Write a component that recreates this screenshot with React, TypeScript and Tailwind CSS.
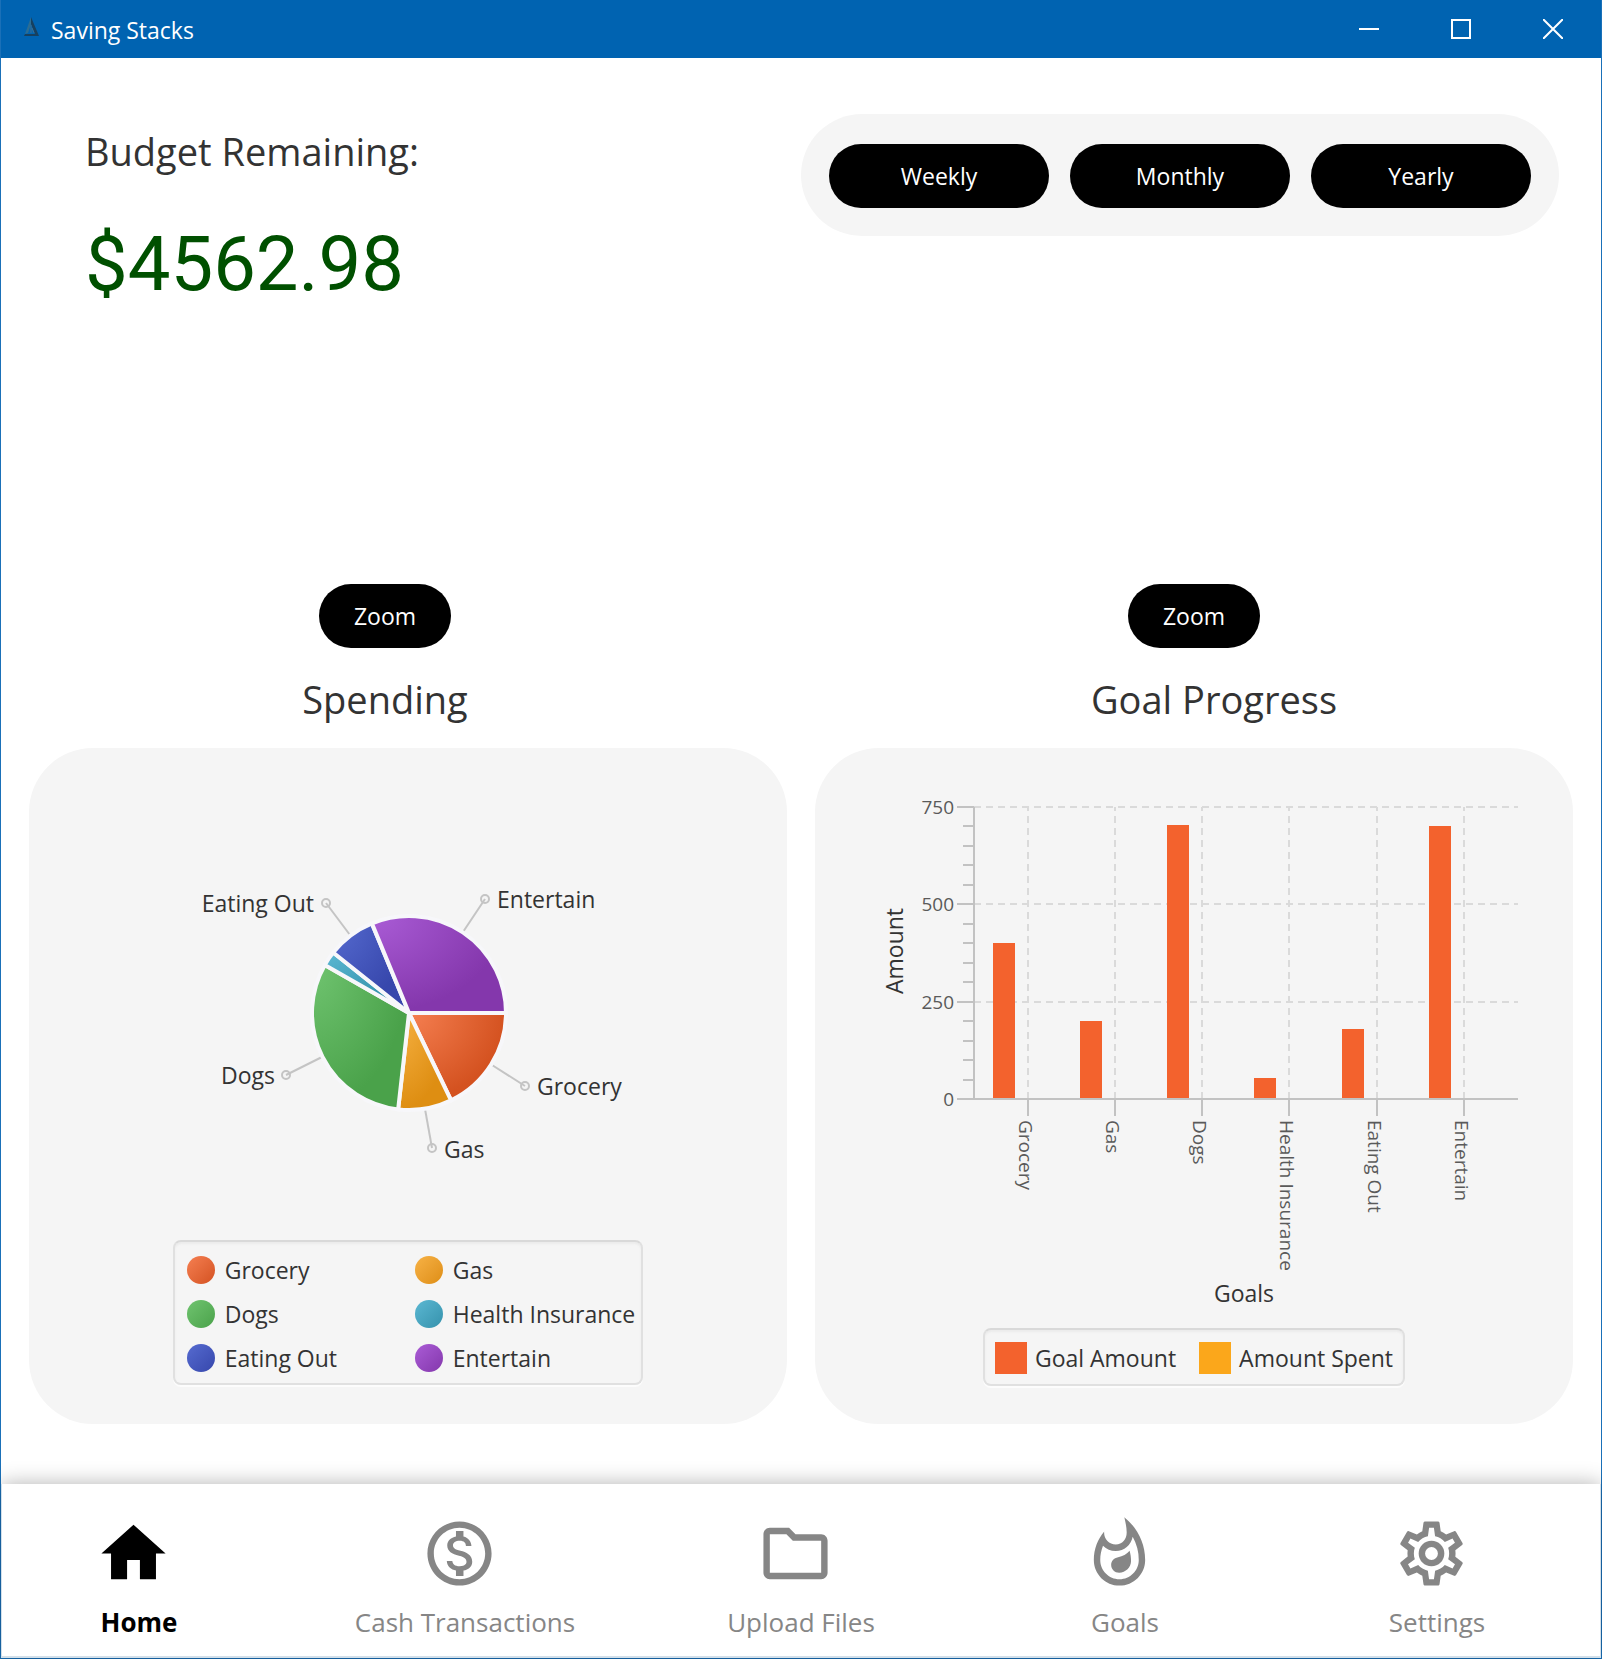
import { MdHome, MdOutlineFolder, MdOutlineMonetizationOn, MdOutlineWhatshot } from 'react-icons/md';
import type { ReactNode } from 'react';

type Category = { name: string; value: number; light: string; dark: string };

const categories: Category[] = [
  { name: 'Grocery', value: 400, light: '#f57f51', dark: '#d45220' },
  { name: 'Gas', value: 200, light: '#f7b244', dark: '#de8e12' },
  { name: 'Dogs', value: 705, light: '#70c470', dark: '#4aa24a' },
  { name: 'Health Insurance', value: 55, light: '#5bb8d3', dark: '#3592ac' },
  { name: 'Eating Out', value: 180, light: '#566bd0', dark: '#3747ac' },
  { name: 'Entertain', value: 700, light: '#aa5cd6', dark: '#8437ac' },
];

const PIE = { x: 229, y: 153, r: 97 };

function slicePaths() {
  const total = categories.reduce((sum, c) => sum + c.value, 0);
  let angle = 0;
  return categories.map((c) => {
    const sweep = (c.value / total) * Math.PI * 2;
    const x1 = PIE.x + PIE.r * Math.cos(angle);
    const y1 = PIE.y + PIE.r * Math.sin(angle);
    angle += sweep;
    const x2 = PIE.x + PIE.r * Math.cos(angle);
    const y2 = PIE.y + PIE.r * Math.sin(angle);
    return `M${PIE.x} ${PIE.y}L${x1} ${y1}A${PIE.r} ${PIE.r} 0 0 1 ${x2} ${y2}Z`;
  });
}

const callouts = [
  { name: 'Entertain', from: [283, 72], to: [305, 39], text: [317, 48], anchor: 'start' },
  { name: 'Eating Out', from: [170, 75], to: [146, 43], text: [134, 52], anchor: 'end' },
  { name: 'Dogs', from: [142, 197], to: [106, 215], text: [95, 224], anchor: 'end' },
  { name: 'Grocery', from: [312, 205], to: [345, 226], text: [357, 235], anchor: 'start' },
  { name: 'Gas', from: [245, 249], to: [252, 288], text: [264, 298], anchor: 'start' },
] as const;

function PieChart() {
  return (
    <svg viewBox="-12 0 480 320" className="w-[480px] max-w-full" role="img" aria-label="Spending by category">
      <defs>
        {categories.map((c, i) => (
          <radialGradient key={c.name} id={`slice-${i}`} cx="0" cy="0" r="1">
            <stop offset="0" stopColor={c.light} />
            <stop offset="1" stopColor={c.dark} />
          </radialGradient>
        ))}
      </defs>
      {callouts.map((c) => (
        <g key={c.name}>
          <path d={`M${c.from[0]} ${c.from[1]}L${c.to[0]} ${c.to[1]}`} stroke="#c4c4c4" strokeWidth="2" />
          <circle cx={c.to[0]} cy={c.to[1]} r="4" fill="none" stroke="#c4c4c4" strokeWidth="2" />
          <text x={c.text[0]} y={c.text[1]} textAnchor={c.anchor} className="fill-[#333] text-[23px]">
            {c.name}
          </text>
        </g>
      ))}
      {slicePaths().map((d, i) => (
        <path key={i} d={d} fill={`url(#slice-${i})`} stroke="#f7f7fa" strokeWidth="4" strokeLinejoin="bevel" />
      ))}
    </svg>
  );
}

const dots = [
  'bg-linear-to-br from-[#f57f51] to-[#d45220]',
  'bg-linear-to-br from-[#f7b244] to-[#de8e12]',
  'bg-linear-to-br from-[#70c470] to-[#4aa24a]',
  'bg-linear-to-br from-[#5bb8d3] to-[#3592ac]',
  'bg-linear-to-br from-[#566bd0] to-[#3747ac]',
  'bg-linear-to-br from-[#aa5cd6] to-[#8437ac]',
];

function Legend({ children, className }: { children: ReactNode; className: string }) {
  return (
    <ul
      className={`rounded-lg border-2 border-[#e0e0e0] border-t-[#d9d9d9] text-[23px] leading-7 whitespace-nowrap shadow-[0_2px_0_#fcfcfc,inset_0_2px_2px_#ebebeb] ${className}`}
    >
      {children}
    </ul>
  );
}

const AXIS = { left: 114, right: 658, top: 27, bottom: 319 };

function BarChart() {
  const height = AXIS.bottom - AXIS.top;
  const yOf = (v: number) => AXIS.bottom - (v / 750) * height;
  const xOf = (i: number) => Math.round(167.5 + i * 87.3);
  const minor = Array.from({ length: 16 }, (_, i) => i * 50);
  return (
    <svg viewBox="-16 0 700 530" className="w-[700px] max-w-full" role="img" aria-label="Goal progress by category">
      <g stroke="#dadada" strokeWidth="2" strokeDasharray="7 5">
        {[250, 500, 750].map((v) => (
          <path key={v} d={`M${AXIS.left} ${Math.round(yOf(v))}H${AXIS.right}`} />
        ))}
        {categories.map((c, i) => (
          <path key={c.name} d={`M${xOf(i)} ${AXIS.bottom}V${AXIS.top}`} />
        ))}
      </g>
      {categories.map((c, i) => (
        <rect key={c.name} x={xOf(i) - 35} y={Math.round(yOf(c.value))} width="22" height={AXIS.bottom - Math.round(yOf(c.value))} fill="#f3622d" />
      ))}
      <g stroke="#c2c2c2" strokeWidth="2">
        <path d={`M${AXIS.left} ${AXIS.top}V${AXIS.bottom}`} />
        <path d={`M97 ${AXIS.bottom}H${AXIS.right}`} />
        {minor.map((v) => (
          <path key={v} d={`M${v % 250 === 0 ? 97 : 103} ${Math.round(yOf(v))}H${AXIS.left}`} />
        ))}
        {categories.map((c, i) => (
          <path key={c.name} d={`M${xOf(i)} ${AXIS.bottom}V336`} />
        ))}
      </g>
      <g className="fill-[#5a5a5a] text-[19px]">
        {[0, 250, 500, 750].map((v) => (
          <text key={v} x="94" y={Math.round(yOf(v)) + 7} textAnchor="end">
            {v}
          </text>
        ))}
        {categories.map((c, i) => (
          <text key={c.name} transform={`translate(${xOf(i) - 9} 340) rotate(90)`}>
            {c.name}
          </text>
        ))}
      </g>
      <g className="fill-[#333] text-[23px]" textAnchor="middle">
        <text transform="translate(43 171) rotate(-90)">Amount</text>
        <text x="384" y="522">
          Goals
        </text>
      </g>
    </svg>
  );
}

function PillButton({ children, className }: { children: ReactNode; className: string }) {
  return (
    <button type="button" className={`h-16 rounded-full bg-black text-[23px] text-white ${className}`}>
      {children}
    </button>
  );
}

function CogIcon() {
  return (
    <svg viewBox="0 0 24 24" fill="currentColor" className="mr-3 size-[77px]" aria-hidden="true">
      <path d="M12,8A4,4 0 0,1 16,12A4,4 0 0,1 12,16A4,4 0 0,1 8,12A4,4 0 0,1 12,8M12,10A2,2 0 0,0 10,12A2,2 0 0,0 12,14A2,2 0 0,0 14,12A2,2 0 0,0 12,10M10,22C9.75,22 9.54,21.82 9.5,21.58L9.13,18.93C8.5,18.68 7.96,18.34 7.44,17.94L4.95,18.95C4.73,19.03 4.46,18.95 4.34,18.73L2.34,15.27C2.21,15.05 2.27,14.78 2.46,14.63L4.57,12.97L4.5,12L4.57,11L2.46,9.37C2.27,9.22 2.21,8.95 2.34,8.73L4.34,5.27C4.46,5.05 4.73,4.96 4.95,5.05L7.44,6.05C7.96,5.66 8.5,5.32 9.13,5.07L9.5,2.42C9.54,2.18 9.75,2 10,2H14C14.25,2 14.46,2.18 14.5,2.42L14.87,5.07C15.5,5.32 16.04,5.66 16.56,6.05L19.05,5.05C19.27,4.96 19.54,5.05 19.66,5.27L21.66,8.73C21.79,8.95 21.73,9.22 21.54,9.37L19.43,11L19.5,12L19.43,13L21.54,14.63C21.73,14.78 21.79,15.05 21.66,15.27L19.66,18.73C19.54,18.95 19.27,19.04 19.05,18.95L16.56,17.95C16.04,18.34 15.5,18.68 14.87,18.93L14.5,21.58C14.46,21.82 14.25,22 14,22H10M11.25,4L10.88,6.61C9.68,6.86 8.62,7.5 7.85,8.39L5.44,7.35L4.69,8.65L6.8,10.2C6.4,11.37 6.4,12.64 6.8,13.8L4.68,15.36L5.43,16.66L7.86,15.62C8.63,16.5 9.68,17.14 10.87,17.38L11.24,20H12.76L13.13,17.39C14.32,17.14 15.37,16.5 16.14,15.62L18.57,16.66L19.32,15.36L17.2,13.81C17.6,12.64 17.6,11.37 17.2,10.2L19.31,8.65L18.56,7.35L16.15,8.39C15.38,7.5 14.32,6.86 13.12,6.62L12.75,4H11.25Z" />
    </svg>
  );
}

function NavItem({ icon, label, active = false }: { icon: ReactNode; label: string; active?: boolean }) {
  return (
    <button
      type="button"
      className={`flex flex-col items-center pt-[31px] text-[26px] leading-9 ${active ? 'font-bold text-black' : 'text-[#868686]'}`}
    >
      {icon}
      <span className="mt-3">{label}</span>
    </button>
  );
}

function TitleBar() {
  return (
    <header className="flex h-[58px] items-center bg-[#0063b1] pr-0.5 pl-[22px] text-[23px] text-white">
      <svg viewBox="0 0 18 22" className="mb-1 h-[22px] w-[18px]" aria-hidden="true">
        <path d="M8 1 2 18l3-1L8 8z" fill="#2b6d94" />
        <path d="M8 1 16 20H1l1-2h10L8 8z" fill="#17405f" />
        <path d="M8 9v8M9 12l2 5" stroke="#3f6f8c" strokeWidth="1" />
      </svg>
      <h1 className="pt-0.5 pl-2.5">Saving Stacks</h1>
      <div className="ml-auto flex h-full">
        <button type="button" aria-label="Minimize" className="grid w-23 place-items-center">
          <svg viewBox="0 0 20 20" className="size-5" stroke="white" strokeWidth="2" aria-hidden="true">
            <path d="M0 10h20" />
          </svg>
        </button>
        <button type="button" aria-label="Maximize" className="grid w-23 place-items-center">
          <svg viewBox="0 0 20 20" className="size-5" fill="none" stroke="white" strokeWidth="2" aria-hidden="true">
            <path d="M1 1h18v18H1z" />
          </svg>
        </button>
        <button type="button" aria-label="Close" className="grid w-23 place-items-center">
          <svg viewBox="0 0 20 20" className="size-5" stroke="white" strokeWidth="2" aria-hidden="true">
            <path d="M0 0 20 20M20 0 0 20" />
          </svg>
        </button>
      </div>
    </header>
  );
}

export default function App() {
  return (
    <div className="flex min-h-screen flex-col border border-t-0 border-[#1a70b8] bg-white font-['Open_Sans','Noto_Sans',sans-serif] text-[#333]">
      <TitleBar />

      <main className="flex grow flex-col justify-between pb-15">
        <section className="flex items-start justify-between pt-14 pr-[42px] pl-[84px]">
          <div className="pt-[13px]">
            <h2 className="text-[38px] leading-12">Budget Remaining:</h2>
            <p className="mt-[45px] font-['Roboto',sans-serif] text-[76px] leading-[88px] text-[#005000]">$4562.98</p>
          </div>
          <div className="flex gap-[21px] rounded-full bg-[#f5f5f5] px-7 pt-[30px] pb-7">
            <PillButton className="w-[220px]">Weekly</PillButton>
            <PillButton className="w-[220px]">Monthly</PillButton>
            <PillButton className="w-[220px]">Yearly</PillButton>
          </div>
        </section>

        <div className="grid grid-cols-2 gap-7 px-7">
          <section className="flex flex-col">
            <div className="flex flex-col items-center pr-[46px]">
              <PillButton className="w-[132px]">Zoom</PillButton>
              <h2 className="mt-[27px] text-[38px] leading-12">Spending</h2>
            </div>
            <div className="mt-[25px] flex h-[676px] flex-col items-center justify-end rounded-[64px] bg-[#f5f5f5] pb-[39px]">
              <PieChart />
              <Legend className="mt-15 grid grid-cols-[228px_auto] gap-y-4 pt-3.5 pr-1.5 pb-[11px] pl-3">
                {categories.map((c, i) => (
                  <li key={c.name} className="flex items-center gap-2.5">
                    <span className={`size-7 rounded-full ${dots[i]}`} />
                    {c.name}
                  </li>
                ))}
              </Legend>
            </div>
          </section>

          <section className="flex flex-col">
            <div className="flex flex-col items-center">
              <PillButton className="w-[132px]">Zoom</PillButton>
              <h2 className="mt-[27px] pl-10 text-[38px] leading-12">Goal Progress</h2>
            </div>
            <div className="mt-[25px] flex h-[676px] flex-col items-center justify-end rounded-[64px] bg-[#f5f5f5] pb-[38px]">
              <BarChart />
              <Legend className="mt-[18px] flex gap-[23px] px-2.5 pt-3 pb-2.5">
                <li className="flex items-center gap-2">
                  <span className="size-8 bg-[#f3622d]" />
                  Goal Amount
                </li>
                <li className="flex items-center gap-2">
                  <span className="size-8 bg-[#fba71b]" />
                  Amount Spent
                </li>
              </Legend>
            </div>
          </section>
        </div>
      </main>

      <nav
        aria-label="Main"
        className="grid h-[174px] grid-cols-[274fr_378fr_294fr_354fr_270fr] items-start border-x border-b-2 border-[#d3e0ea] bg-white pr-7 shadow-[0_0_20px_rgba(0,0,0,0.3)]"
      >
        <NavItem active label="Home" icon={<MdHome className="mr-3 size-[77px]" />} />
        <NavItem label="Cash Transactions" icon={<MdOutlineMonetizationOn className="mr-3 size-[77px]" />} />
        <NavItem label="Upload Files" icon={<MdOutlineFolder className="mr-3 size-[77px]" />} />
        <NavItem label="Goals" icon={<MdOutlineWhatshot className="mr-3 size-[77px]" />} />
        <NavItem label="Settings" icon={<CogIcon />} />
      </nav>
    </div>
  );
}
